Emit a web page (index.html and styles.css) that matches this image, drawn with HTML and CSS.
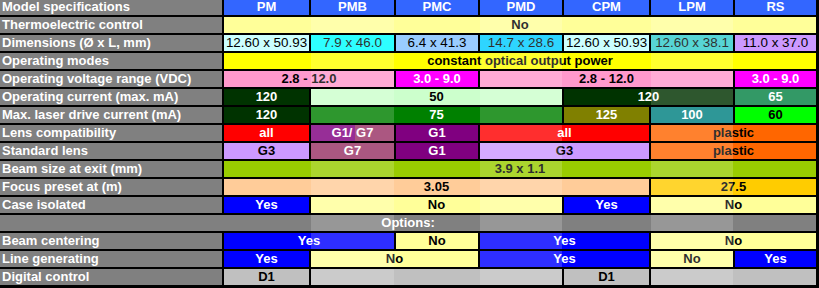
FILE: index.html
```html
<!DOCTYPE html>
<html>
<head>
<meta charset="utf-8">
<title>Model specifications</title>
<link rel="stylesheet" href="styles.css">
</head>
<body>
<div class="sheet">
<table class="spec">
<colgroup>
<col class="c-label"><col class="c-pm"><col class="c-pmb"><col class="c-pmc"><col class="c-pmd"><col class="c-cpm"><col class="c-lpm"><col class="c-rs">
</colgroup>
<tr class="head"><th class="lbl">Model specifications</th><th>PM</th><th>PMB</th><th>PMC</th><th>PMD</th><th>CPM</th><th>LPM</th><th>RS</th></tr>
<tr><td class="lbl">Thermoelectric control</td><td colspan="7" class="ltyellow">No</td></tr>
<tr class="dims"><td class="lbl">Dimensions (Ø x L, mm)</td><td class="ltcyan">12.60 x 50.93</td><td class="cyan">7.9 x 46.0</td><td class="paleblue">6.4 x 41.3</td><td class="skyblue">14.7 x 28.6</td><td class="ltcyan">12.60 x 50.93</td><td class="aqua">12.60 x 38.1</td><td class="lilac">11.0 x 37.0</td></tr>
<tr><td class="lbl">Operating modes</td><td colspan="7" class="yellow">constant optical output power</td></tr>
<tr><td class="lbl">Operating voltage range (VDC)</td><td colspan="2" class="pink">2.8 - 12.0</td><td class="magenta">3.0 - 9.0</td><td colspan="3" class="pink">2.8 - 12.0</td><td class="magenta">3.0 - 9.0</td></tr>
<tr><td class="lbl">Operating current (max. mA)</td><td class="dkgreen">120</td><td colspan="3" class="mint">50</td><td colspan="2" class="dkgreen">120</td><td class="seagreen">65</td></tr>
<tr><td class="lbl">Max. laser drive current (mA)</td><td class="dkgreen">120</td><td colspan="3" class="green">75</td><td class="olive">125</td><td class="teal">100</td><td class="lime">60</td></tr>
<tr><td class="lbl">Lens compatibility</td><td class="red">all</td><td class="split">G1/ G7</td><td class="purple">G1</td><td colspan="2" class="red">all</td><td colspan="2" class="orange">plastic</td></tr>
<tr><td class="lbl">Standard lens</td><td class="lilac">G3</td><td class="plum">G7</td><td class="purple">G1</td><td colspan="2" class="lilac">G3</td><td colspan="2" class="orange">plastic</td></tr>
<tr><td class="lbl">Beam size at exit (mm)</td><td colspan="7" class="yelgreen">3.9 x 1.1</td></tr>
<tr><td class="lbl">Focus preset at (m)</td><td colspan="5" class="peach">3.05</td><td colspan="2" class="gold">27.5</td></tr>
<tr><td class="lbl">Case isolated</td><td class="blue">Yes</td><td colspan="3" class="ltyellow">No</td><td class="blue">Yes</td><td colspan="2" class="ltyellow">No</td></tr>
<tr><td colspan="8" class="section">Options:</td></tr>
<tr><td class="lbl">Beam centering</td><td colspan="2" class="blue">Yes</td><td class="ltyellow">No</td><td colspan="2" class="blue">Yes</td><td colspan="2" class="ltyellow">No</td></tr>
<tr><td class="lbl">Line generating</td><td class="blue">Yes</td><td colspan="2" class="ltyellow">No</td><td colspan="2" class="blue">Yes</td><td class="ltyellow">No</td><td class="blue">Yes</td></tr>
<tr><td class="lbl">Digital control</td><td class="silver">D1</td><td colspan="3" class="silver"></td><td class="silver">D1</td><td colspan="2" class="silver"></td></tr>
</table>
</div>
</body>
</html>
```

FILE: styles.css
```css
html, body {
  margin: 0;
  padding: 0;
  background: #000;
}
body {
  width: 819px;
  height: 288px;
  overflow: hidden;
  font-family: "Liberation Sans", Arial, sans-serif;
}
.sheet {
  display: flow-root;
  position: relative;
}
/* translucent highlight over alternate model columns (PMB, PMD, LPM) */
.sheet::after {
  content: "";
  position: absolute;
  left: 0;
  right: 0;
  top: 17px;
  height: 268px;
  pointer-events: none;
  background: linear-gradient(to right,
    transparent 0 311px,
    rgba(255,255,255,0.18) 311px 394px,
    transparent 394px 480px,
    rgba(255,255,255,0.18) 480px 562px,
    transparent 562px 651px,
    rgba(255,255,255,0.18) 651px 733px,
    transparent 733px);
  -webkit-mask-image: repeating-linear-gradient(to bottom, #000 0 16px, transparent 16px 18px);
  mask-image: repeating-linear-gradient(to bottom, #000 0 16px, transparent 16px 18px);
}
.spec {
  border-collapse: separate;
  border-spacing: 2px;
  background: #000;
  table-layout: fixed;
  width: 820px;
  margin: -3px 0 0 -2px;
  font-size: 13px;
  font-weight: bold;
}
.c-label { width: 222px; }
.c-pm { width: 85px; }
.c-pmb { width: 83px; }
.c-pmc { width: 82px; }
.c-pmd { width: 82px; }
.c-cpm { width: 85px; }
.c-lpm { width: 82px; }
.c-rs { width: 81px; }

.spec th, .spec td {
  padding: 0;
  height: 16px;
  line-height: 16px;
  text-align: center;
  white-space: nowrap;
  overflow: hidden;
  color: #000;
  font-weight: bold;
}
.spec .lbl {
  background: #808080;
  color: #fff;
  text-align: left;
  padding-left: 2px;
}
.head th {
  background: #3366ff;
  color: #fff;
}
.spec .section {
  background: #808080;
  color: #fff;
}
.dims td:not(.lbl) {
  font-weight: normal;
  font-size: 13.4px;
}

.ltyellow { background: #ffff99; }
.yellow { background: #ffff00; }
.ltcyan { background: #ccffff; }
.cyan { background: #00ffff; }
.paleblue { background: #99ccff; }
.skyblue { background: #00ccff; }
.aqua { background: #33cccc; }
.lilac { background: #cc99ff; }
.pink { background: #ff99cc; }
.spec .magenta { background: #ff00ff; color: #fff; }
.spec .dkgreen { background: #003300; color: #fff; }
.mint { background: #ccffcc; }
.spec .seagreen { background: #339966; color: #fff; }
.spec .green { background: #008000; color: #fff; }
.spec .olive { background: #808000; color: #fff; }
.spec .teal { background: #008080; color: #fff; }
.lime { background: #00ff00; }
.spec .red { background: #ff0000; color: #fff; }
.spec .purple { background: #800080; color: #fff; }
.spec .plum { background: #993366; color: #fff; }
.spec .split { background: linear-gradient(to right, #800080 0 53%, #993366 53%); color: #fff; }
.orange { background: #ff6600; }
.yelgreen { background: #99cc00; }
.peach { background: #ffcc99; }
.gold { background: #ffcc00; }
.spec .blue { background: #0000ff; color: #fff; }
.silver { background: #c0c0c0; }
```
